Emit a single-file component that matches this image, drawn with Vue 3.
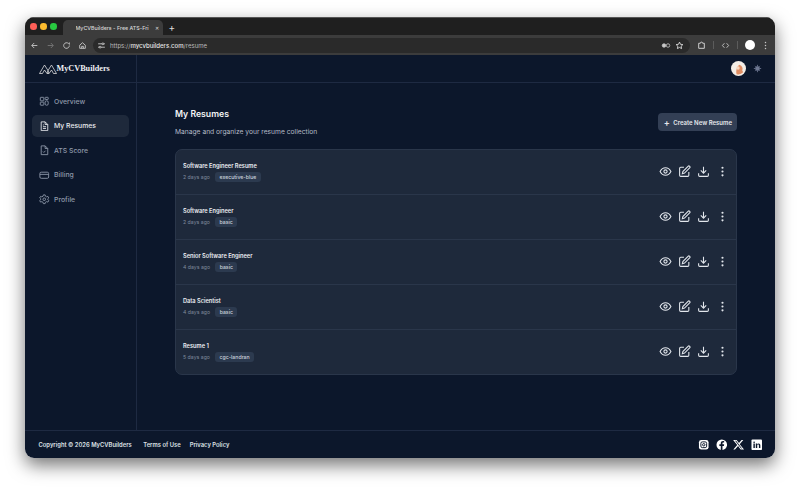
<template>
  <div class="desktop">
    <div class="window">
      <!-- browser chrome -->
      <div class="tabbar">
        <div class="lights"><i class="red"></i><i class="yellow"></i><i class="green"></i></div>
        <div class="tab">
          <span class="tab-title">MyCVBuilders - Free ATS-Fri</span>
          <span class="tab-x">✕</span>
        </div>
        <span class="tab-plus">+</span>
      </div>
      <div class="toolbar">
        <svg class="tb-icon" viewBox="0 0 16 16"><path d="M13 8H3.500M7.500 3.500 3 8l4.500 4.500" /></svg>
        <svg class="tb-icon dim" viewBox="0 0 16 16"><path d="M3 8h9.500M8.500 3.500 13 8l-4.500 4.500" /></svg>
        <svg class="tb-icon" viewBox="0 0 16 16"><path d="M13 8a5 5 0 1 1-1.500-3.500L13 6V2.500" /></svg>
        <svg class="tb-icon" viewBox="0 0 16 16"><path d="M3 7.500 8 3l5 4.500V13H3zM6.500 13V9.500h3V13" /></svg>
        <div class="omnibox">
          <svg class="tb-icon" viewBox="0 0 16 16"><path d="M2 5h7M12 5h2M2 11h2M7 11h7" /><circle cx="10.500" cy="5" r="1.600" /><circle cx="5.500" cy="11" r="1.600" /></svg>
          <span class="url">https://<b>mycvbuilders.com</b>/resume</span>
          <svg class="tb-icon key" viewBox="0 0 20 16"><circle cx="6" cy="8" r="3.500" fill="#c7c7c7" /><circle cx="14" cy="8" r="3.500" /><path d="M9.500 8h1" /></svg>
          <svg class="tb-icon star" viewBox="0 0 16 16"><path d="m8 2 1.800 3.900 4.200.5-3.100 2.900.8 4.200L8 11.400l-3.700 2.100.8-4.200L2 6.400l4.200-.5z" /></svg>
        </div>
        <svg class="tb-icon puzzle" viewBox="0 0 16 16"><path d="M3 4h3a2 2 0 0 1 4 0h3v9H3z" /></svg>
        <span class="tb-sep"></span>
        <svg class="tb-icon" viewBox="0 0 16 16"><path d="M6 4 2.500 8 6 12M10 4l3.500 4-3.500 4" /></svg>
        <span class="tb-sep"></span>
        <span class="chrome-avatar"></span>
        <svg class="tb-dots" viewBox="0 0 4 12"><circle cx="2" cy="2" r="1" /><circle cx="2" cy="6" r="1" /><circle cx="2" cy="10" r="1" /></svg>
      </div>

      <!-- page -->
      <div class="page">
        <div class="shell">
          <aside class="sidebar">
            <div class="logo">
              <svg class="logo-mark" viewBox="0 0 36 20"><path d="M1 19 11 2l7 11 7-11 10 17H29l-4-7-5 7h-4l-5-7-4 7z" /><path d="M18 13l-2 6M18 13l2 6" /></svg>
              <span class="logo-text">MyCVBuilders</span>
            </div>
            <nav class="nav">
              <a v-for="item in navItems" :key="item.label" class="nav-item" :class="{ active: item.active }">
                <svg class="nav-icon" viewBox="0 0 24 24" v-html="item.icon"></svg>
                <span>{{ item.label }}</span>
              </a>
            </nav>
          </aside>

          <div class="right">
            <header class="topbar">
              <div class="user-avatar">
                <svg viewBox="0 0 16 16"><circle cx="8" cy="8" r="8" fill="#f4ede6" /><path d="M6 14c-1-3 0-8 3-10 3 1 4 4 3 6l1 2a7 7 0 0 1-7 2z" fill="#e08d62" /><circle cx="7.500" cy="7.500" r="1.800" fill="#f7d6bf" /></svg>
              </div>
              <svg class="theme" viewBox="0 0 16 16"><circle cx="8" cy="8" r="3.500" /><path d="M8 1.500v2M8 12.500v2M1.500 8h2M12.500 8h2M3.400 3.400l1.400 1.400M11.200 11.200l1.400 1.400M3.400 12.600l1.400-1.400M11.200 4.800l1.400-1.400" /></svg>
            </header>

            <main class="main">
              <div class="head">
                <div>
                  <h1>My Resumes</h1>
                  <p>Manage and organize your resume collection</p>
                </div>
                <button class="create"><span class="plus">+</span>Create New Resume</button>
              </div>

              <section class="card">
                <div v-for="r in resumes" :key="r.name" class="row">
                  <div class="info">
                    <div class="name">{{ r.name }}</div>
                    <div class="meta">
                      <span class="ago">{{ r.ago }}</span>
                      <span class="tag">{{ r.tag }}</span>
                    </div>
                  </div>
                  <div class="actions">
                    <svg viewBox="0 0 24 24"><path d="M2 12s3.600-7 10-7 10 7 10 7-3.600 7-10 7-10-7-10-7z" /><circle cx="12" cy="12" r="3" /></svg>
                    <svg viewBox="0 0 24 24"><path d="M11 4H5a2 2 0 0 0-2 2v13a2 2 0 0 0 2 2h13a2 2 0 0 0 2-2v-6" /><path d="M18.500 2.500a2.100 2.100 0 0 1 3 3L12 15l-4 1 1-4z" /></svg>
                    <svg viewBox="0 0 24 24"><path d="M3 15v4a2 2 0 0 0 2 2h14a2 2 0 0 0 2-2v-4M7 10l5 5 5-5M12 15V3" /></svg>
                    <svg class="more" viewBox="0 0 24 24"><circle cx="12" cy="5" r="2" /><circle cx="12" cy="12" r="2" /><circle cx="12" cy="19" r="2" /></svg>
                  </div>
                </div>
              </section>
            </main>
          </div>
        </div>

        <footer class="footer">
          <div class="foot-links">
            <span class="copy">Copyright © 2026 MyCVBuilders</span>
            <a>Terms of Use</a>
            <a>Privacy Policy</a>
          </div>
          <div class="socials">
            <svg viewBox="0 0 24 24"><rect x="2" y="2" width="20" height="20" rx="5" fill="#fff" /><rect x="6" y="6" width="12" height="12" rx="3" fill="none" stroke="#0c172b" stroke-width="2" /><circle cx="12" cy="12" r="2.500" fill="none" stroke="#0c172b" stroke-width="2" /></svg>
            <svg viewBox="0 0 24 24"><circle cx="12" cy="12" r="11" fill="#fff" /><path d="M13.500 23v-8.500h3l.5-3.500h-3.500V9c0-1 .5-1.800 2-1.800H17V4.200C16.500 4.100 15.500 4 14.500 4 11.800 4 10 5.600 10 8.500V11H7v3.500h3V23z" fill="#0c172b" /></svg>
            <svg viewBox="0 0 24 24"><path d="M18 2h3.500l-7.600 8.700L23 22h-7l-5.500-7.200L4.200 22H.7l8.100-9.300L.3 2h7.200l5 6.600zM16.800 20h1.900L6.400 3.900H4.300z" fill="#fff" /></svg>
            <svg viewBox="0 0 24 24"><rect x="1" y="1" width="22" height="22" rx="2" fill="#fff" /><path d="M5 9.500h3V19H5zM6.500 5a1.700 1.700 0 1 1 0 3.400 1.700 1.700 0 0 1 0-3.400zM10 9.500h2.900v1.300c.5-.9 1.600-1.600 3-1.600 3 0 3.600 2 3.600 4.500V19h-3v-4.700c0-1.200 0-2.600-1.600-2.600s-1.900 1.200-1.900 2.500V19h-3z" fill="#0c172b" /></svg>
          </div>
        </footer>
      </div>
    </div>
  </div>
</template>

<script setup>
const navItems = [
  {
    label: "Overview",
    icon: '<rect x="3" y="3" width="8" height="8" rx="1"/><rect x="14" y="3" width="7" height="5" rx="1"/><rect x="3" y="14" width="8" height="7" rx="1"/><rect x="14" y="11" width="7" height="10" rx="3"/>',
  },
  {
    label: "My Resumes",
    active: true,
    icon: '<path d="M5 2h9l6 6v14H5z"/><path d="M14 2v6h6M9 13h7M9 17h7M9 9h2"/>',
  },
  {
    label: "ATS Score",
    icon: '<path d="M5 2h9l6 6v14H5z"/><path d="M14 2v6h6M9 15l2 2 4-4"/>',
  },
  {
    label: "Billing",
    icon: '<rect x="2" y="5" width="20" height="14" rx="3"/><path d="M2 10h20"/>',
  },
  {
    label: "Profile",
    icon: '<circle cx="12" cy="12" r="3"/><path d="M10 2h4l.7 3 2.700 1.500 3-1 2 3.500-2.300 2v2l2.300 2-2 3.500-3-1L14.700 19l-.7 3h-4l-.7-3-2.700-1.500-3 1-2-3.500L3.900 13v-2L1.600 9l2-3.500 3 1L9.300 5z"/>',
  },
];

const resumes = [
  { name: "Software Engineer Resume", ago: "2 days ago", tag: "executive-blue" },
  { name: "Software Engineer", ago: "2 days ago", tag: "basic" },
  { name: "Senior Software Engineer", ago: "4 days ago", tag: "basic" },
  { name: "Data Scientist", ago: "4 days ago", tag: "basic" },
  { name: "Resume 1", ago: "5 days ago", tag: "cgc-landran" },
];
</script>

<style>
html,
body {
  margin: 0;
  background: #fff;
}
</style>

<style scoped>
.desktop {
  box-sizing: border-box;
  height: 491px;
  padding: 17px 25px 33px;
  overflow: hidden;
}
.window {
  height: 441px;
  border-radius: 9px;
  overflow: hidden;
  display: flex;
  flex-direction: column;
  font-family: Inter, "Liberation Sans", sans-serif;
  box-shadow: 0 7px 18px rgba(0, 0, 0, 0.55);
}

.tabbar {
  height: 18px;
  flex: none;
  background: #1f1f1f;
  border-top: 1px solid #555;
  box-sizing: border-box;
  display: flex;
  align-items: flex-end;
  padding-left: 5px;
}
.lights {
  display: flex;
  gap: 3.500px;
  align-self: center;
  margin-right: 6px;
}
.lights i {
  width: 6.500px;
  height: 6.500px;
  border-radius: 50%;
}
.red { background: #ff5f57; }
.yellow { background: #febc2e; }
.green { background: #28c840; }
.tab {
  width: 100px;
  height: 15px;
  background: #3c3c3c;
  border-radius: 5px 5px 0 0;
  display: flex;
  align-items: center;
  box-sizing: border-box;
  padding: 0 4px 0 13px;
  color: #d8d8d8;
  font-size: 5.300px;
  font-weight: 500;
}
.tab-title {
  flex: 1;
  overflow: hidden;
  white-space: nowrap;
}
.tab-x {
  font-size: 5px;
  margin-left: 3px;
  color: #ddd;
}
.tab-plus {
  color: #ddd;
  font-size: 10px;
  line-height: 15px;
  margin-left: 6px;
}

.toolbar {
  height: 20px;
  flex: none;
  background: #3c3c3c;
  display: flex;
  align-items: center;
  padding: 0 8.500px 0 4.500px;
  gap: 7px;
}
.tb-icon {
  width: 9px;
  height: 9px;
  fill: none;
  stroke: #c7c7c7;
  stroke-width: 1.600;
  flex: none;
}
.tb-icon.dim { stroke: #777; }
.omnibox {
  flex: 1;
  height: 15px;
  margin-left: -0.500px;
  background: #2a2a2a;
  border-radius: 8px;
  display: flex;
  align-items: center;
  padding: 0 6px 0 4px;
  gap: 4px;
}
.url {
  flex: 1;
  font-size: 6.050px;
  color: #b8b8b8;
}
.url b {
  color: #e6e6e6;
  font-weight: 500;
}
.key { width: 10px; }
.star { stroke: #ddd; }
.puzzle { stroke: #ddd; }
.tb-sep {
  width: 1px;
  height: 8px;
  background: #5c5c5c;
}
.chrome-avatar {
  width: 10px;
  height: 10px;
  border-radius: 50%;
  background: #fff;
  margin-right: 1.500px;
}
.tb-dots {
  width: 3px;
  height: 9px;
  fill: #c7c7c7;
  flex: none;
}

.page {
  flex: 1;
  min-height: 0;
  background: #0c172b;
  display: flex;
  flex-direction: column;
}
.shell {
  flex: 1;
  min-height: 0;
  display: flex;
}

.sidebar {
  width: 112px;
  flex: none;
  box-sizing: border-box;
  border-right: 1px solid #1e2a42;
}
.logo {
  height: 28px;
  border-bottom: 1px solid #1e2a42;
  box-sizing: border-box;
  display: flex;
  align-items: center;
  padding-left: 13.500px;
}
.logo-mark {
  width: 18px;
  height: 10px;
  fill: none;
  stroke: #e8e8e8;
  stroke-width: 1.500;
  flex: none;
}
.logo-text {
  font-family: "Liberation Serif", serif;
  font-weight: 700;
  font-size: 8.200px;
  color: #eef0f3;
}
.nav {
  display: flex;
  flex-direction: column;
  gap: 2px;
  padding: 7px 7px 0;
}
.nav-item {
  height: 22.500px;
  border-radius: 5px;
  display: flex;
  align-items: center;
  gap: 4.500px;
  padding-left: 7px;
  font-size: 6.850px;
  font-weight: 500;
  color: #8f99aa;
}
.nav-item.active {
  background: #1e293b;
  color: #e8eaee;
}
.nav-icon {
  width: 10.500px;
  height: 10.500px;
  fill: none;
  stroke: currentColor;
  stroke-width: 2;
  flex: none;
}

.right {
  flex: 1;
  min-width: 0;
  display: flex;
  flex-direction: column;
}
.topbar {
  height: 28px;
  flex: none;
  box-sizing: border-box;
  border-bottom: 1px solid #1e2a42;
  display: flex;
  align-items: center;
  justify-content: flex-end;
  gap: 7px;
  padding-right: 13.500px;
}
.user-avatar {
  width: 15px;
  height: 15px;
}
.user-avatar svg {
  display: block;
  width: 100%;
  height: 100%;
}
.theme {
  width: 9px;
  height: 9px;
  fill: #6f7993;
  stroke: #6f7993;
  stroke-width: 1.500;
}

.main {
  padding: 24px 38px 0;
}
.head {
  display: flex;
  justify-content: space-between;
  align-items: center;
  margin-bottom: 12px;
}
.head h1 {
  margin: 0 0 6px;
  font-size: 8.700px;
  line-height: 14px;
  font-weight: 600;
  color: #f3f4f6;
}
.head p {
  margin: 0;
  font-size: 6.700px;
  line-height: 10px;
  color: #b3bac6;
}
.create {
  height: 18px;
  padding: 0 5px 0 6px;
  border: 0;
  border-radius: 4px;
  background: #333f55;
  color: #e5e7eb;
  font-family: inherit;
  font-size: 6px;
  font-weight: 600;
  display: flex;
  align-items: center;
}
.plus {
  font-size: 9px;
  margin-right: 3.500px;
}

.card {
  background: #1e293b;
  border: 1px solid #2a364a;
  border-radius: 7px;
  box-sizing: border-box;
  height: 226px;
  display: flex;
  flex-direction: column;
}
.row {
  flex: 1;
  display: flex;
  align-items: center;
  justify-content: space-between;
  padding: 0 7px 0 7px;
  border-bottom: 1px solid #2a364a;
}
.row:last-child {
  border-bottom: 0;
}
.name {
  font-size: 5.660px;
  line-height: 9px;
  font-weight: 600;
  color: #eceff3;
  margin-bottom: 1px;
}
.meta {
  display: flex;
  align-items: center;
  gap: 5px;
}
.ago {
  font-size: 5.200px;
  color: #7f8a9c;
}
.tag {
  font-size: 5.200px;
  font-weight: 500;
  line-height: 10px;
  padding: 0 4.500px;
  border-radius: 3px;
  background: #2c3a4f;
  color: #cbd2dc;
}
.actions {
  display: flex;
  align-items: center;
  gap: 6px;
  margin-bottom: 1px;
}
.actions svg {
  width: 13px;
  height: 13px;
  fill: none;
  stroke: #e2e6ec;
  stroke-width: 2;
  flex: none;
}
.actions .more {
  fill: #e2e6ec;
  stroke: none;
}

.footer {
  height: 28px;
  flex: none;
  box-sizing: border-box;
  border-top: 1px solid #1e2a42;
  display: flex;
  align-items: center;
  justify-content: space-between;
  padding: 0 13px 0 13.500px;
  font-size: 5.850px;
  font-weight: 600;
  color: #dfe2e7;
}
.foot-links {
  display: flex;
  gap: 9px;
}
.copy {
  margin-right: 2.500px;
}
.socials {
  display: flex;
  gap: 6px;
}
.socials svg {
  width: 11.500px;
  height: 11.500px;
}
</style>
